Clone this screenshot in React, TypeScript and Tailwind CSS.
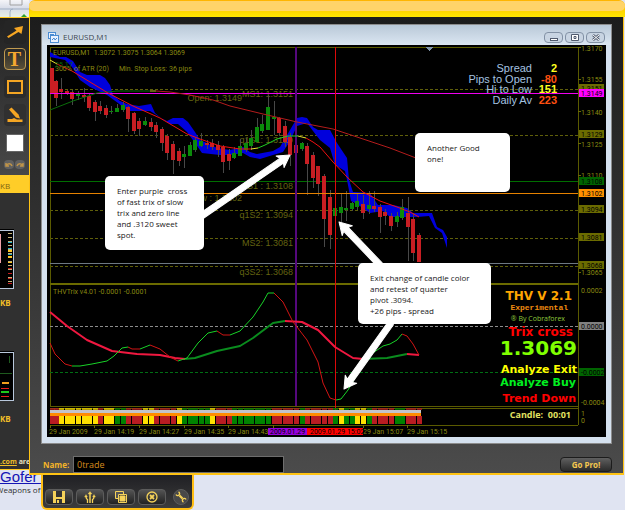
import React from 'react'

type Point = [number, number]

const CANDLE_STEP = 5.59
const CANDLE_START = 50

// open/close top, open/close bottom, high, low, colour
type Candle = [number, number, number, number, 'r' | 'g']

const candles: Candle[] = [
  [68, 93, 68, 93, 'r'], [81, 98, 80, 106, 'r'], [89, 92, 78, 99, 'r'], [91, 93, 90, 95, 'r'],
  [92, 99, 90, 105, 'r'], [94, 96, 91, 100, 'g'], [95, 97, 88, 102, 'r'], [96, 108, 94, 111, 'r'],
  [102, 112, 100, 121, 'r'], [106, 111, 101, 114, 'r'], [108, 115, 105, 118, 'r'], [111, 112, 106, 114, 'g'],
  [108, 112, 104, 112, 'g'], [105, 110, 102, 112, 'g'], [107, 119, 106, 132, 'r'], [113, 131, 112, 134, 'r'],
  [121, 129, 118, 136, 'r'], [121, 125, 117, 126, 'g'], [122, 127, 118, 131, 'r'], [125, 132, 122, 138, 'r'],
  [129, 143, 127, 151, 'r'], [136, 153, 134, 160, 'r'], [144, 160, 141, 174, 'r'], [151, 161, 148, 166, 'r'],
  [154, 157, 146, 168, 'g'], [145, 156, 142, 156, 'g'], [140, 150, 138, 152, 'g'], [141, 146, 133, 147, 'g'],
  [143, 145, 140, 149, 'r'], [143, 147, 139, 150, 'r'], [145, 150, 141, 157, 'r'], [147, 162, 145, 173, 'r'],
  [154, 161, 149, 170, 'r'], [153, 158, 147, 159, 'g'], [146, 156, 139, 156, 'g'], [143, 150, 138, 152, 'g'],
  [138, 146, 130, 150, 'g'], [127, 142, 118, 142, 'g'], [124, 131, 115, 133, 'g'], [107, 130, 95, 130, 'g'],
  [117, 119, 101, 135, 'g'], [118, 133, 117, 136, 'r'], [126, 142, 121, 147, 'r'], [137, 155, 133, 166, 'r'],
  [145, 153, 140, 156, 'r'], [143, 149, 142, 151, 'g'], [146, 164, 143, 195, 'r'], [155, 178, 152, 188, 'r'],
  [166, 184, 166, 196, 'r'], [176, 219, 174, 247, 'r'], [197, 235, 190, 249, 'r'], [208, 216, 203, 219, 'g'],
  [207, 213, 193, 222, 'g'], [208, 210, 191, 221, 'g'], [203, 209, 202, 211, 'g'], [201, 207, 193, 210, 'g'],
  [204, 213, 195, 219, 'r'], [205, 209, 191, 214, 'g'], [206, 209, 191, 212, 'r'], [207, 217, 204, 233, 'r'],
  [212, 216, 209, 225, 'r'], [216, 226, 213, 231, 'r'], [216, 222, 212, 227, 'g'], [207, 218, 199, 220, 'g'],
  [213, 227, 197, 261, 'r'], [219, 253, 213, 261, 'r'], [235, 262, 233, 262, 'r'],
]

const trend = 'RRYYYYYYYRYYGGRRRYYRRRRYGGGGGYRRRGGGGGGGRRRRRGRRRRRGYGGYYGRRRRGGRRR'.split('')

const trendColor: Record<string, string> = { R: '#b81c22', Y: '#ffe000', G: '#008200' }
const candleColor = { r: '#c81e23', g: '#0a8a0a' }

const cloud =
  'M50 52 L60 57 66 57 73 61 80 72 87 75 100 75 105 78 110 85 113 95 120 101 127 104 139 106 151 104 155 113 161 118 167 121 173 118 183 118 188 122 195 132 200 140 207 143 217 148 230 150 243 147 250 152 257 154 273 151 280 147 290 130 297 118 302 117 307 118 313 127 318 130 330 130 337 143 347 158 349 180 353 192 370 193 378 205 393 205 407 208 413 213 432 213 437 227 443 230 447 237 447 248 442 233 435 228 429 216 417 217 390 217 383 211 370 213 357 204 351 201 347 180 345 171 335 165 330 148 320 140 313 131 307 123 297 126 290 141 283 152 273 155 260 159 250 157 243 153 230 155 220 155 202 153 195 143 187 132 178 124 170 124 155 114 150 111 128 111 118 103 107 95 90 87 80 80 72 67 65 60 50 57Z'

interface Segment {
  color: string
  points: Point[]
}

const fastAverage: Segment[] = [
  { color: '#e8e030', points: [[50, 60], [57, 64]] },
  { color: '#f01010', points: [[57, 64], [72, 71], [90, 82], [108, 93], [133, 106], [160, 118], [187, 134], [200, 139], [220, 146], [240, 149], [251, 149]] },
  { color: '#e8e030', points: [[251, 149], [258, 148]] },
  { color: '#20d020', points: [[258, 148], [265, 145], [277, 139], [288, 136], [298, 136]] },
  { color: '#e8e030', points: [[298, 136], [306, 138]] },
  { color: '#f01010', points: [[306, 138], [313, 142], [320, 147], [333, 162], [347, 177], [363, 192], [380, 201], [397, 207], [410, 212], [419, 217]] },
]

const slowAverage: Segment[] = [
  { color: '#0a6e0a', points: [[50, 110], [73, 101], [97, 93], [117, 91], [150, 91]] },
  { color: '#c8c020', points: [[150, 91], [156, 91]] },
  { color: '#b41c1c', points: [[156, 91], [170, 92], [190, 95], [213, 100], [230, 106], [263, 114], [297, 122], [333, 129], [363, 139], [390, 148], [416, 158]] },
]

const fastTrix: Segment[] = [
  { color: '#d21414', points: [[50, 343], [55, 354], [65, 364], [72, 366]] },
  { color: '#18d228', points: [[72, 366], [80, 366], [92, 364], [107, 361], [114, 356], [122, 348], [128, 347]] },
  { color: '#d21414', points: [[128, 347], [132, 349], [140, 349]] },
  { color: '#18d228', points: [[140, 349], [150, 345]] },
  { color: '#d21414', points: [[150, 345], [160, 349], [170, 357], [178, 361]] },
  { color: '#18d228', points: [[178, 361], [187, 358], [198, 343], [208, 333], [217, 331]] },
  { color: '#d21414', points: [[217, 331], [223, 335], [230, 335]] },
  { color: '#18d228', points: [[230, 335], [240, 331], [253, 317], [263, 302], [268, 293], [274, 293]] },
  { color: '#d21414', points: [[274, 293], [283, 302], [293, 322], [297, 327], [307, 340], [318, 362], [323, 383], [330, 398], [336, 400]] },
  { color: '#18d228', points: [[336, 400], [341, 399], [348, 390], [367, 357], [383, 346], [390, 344], [397, 340], [402, 334]] },
  { color: '#d21414', points: [[402, 334], [407, 336], [413, 344], [419, 355]] },
]

const slowTrix: Segment[] = [
  { color: '#f01840', points: [[50, 312], [67, 326], [87, 340], [112, 351], [137, 354], [160, 355], [175, 358], [185, 359]] },
  { color: '#0a8c1e', points: [[185, 359], [195, 358], [217, 351], [240, 346], [253, 338], [273, 323], [285, 321]] },
  { color: '#f01840', points: [[285, 321], [302, 322], [318, 330], [335, 347], [353, 358], [363, 359]] },
  { color: '#0a8c1e', points: [[363, 359], [387, 358], [407, 354]] },
  { color: '#f01840', points: [[407, 354], [419, 355]] },
]

const pivotLabels = [
  { text: 'Open: 1.3149', x: 242, y: 101 },
  { text: 'MS1: 1.3151', x: 293, y: 97 },
  { text: 'q1S1: 1.3129', x: 293, y: 143 },
  { text: 'S1 : 1.3108', x: 293, y: 189 },
  { text: 'Low : 1.3102', x: 242, y: 201 },
  { text: 'q1S2: 1.3094', x: 293, y: 218 },
  { text: 'MS2: 1.3081', x: 293, y: 246 },
  { text: 'q3S2: 1.3068', x: 293, y: 275 },
]

const priceLabels = [
  { text: '1.3170', y: 48 },
  { text: '1.3155', y: 79 },
  { text: '1.3140', y: 112 },
  { text: '1.3125', y: 144 },
  { text: '1.3110', y: 175 },
  { text: '1.3065', y: 272 },
  { text: '0.0002', y: 290 },
  { text: '-0.0004', y: 402 },
  { text: '1', y: 413 },
  { text: '0', y: 420 },
]

const priceTags = [
  { text: '1.3151', y: 88, fill: '#6b6b00' },
  { text: '1.3149', y: 93, fill: '#ff00ff' },
  { text: '1.3129', y: 134, fill: '#6b6b00' },
  { text: '1.3108', y: 181, fill: '#006400' },
  { text: '1.3102', y: 193, fill: '#ff9000' },
  { text: '1.3094', y: 209, fill: '#6b6b00' },
  { text: '1.3081', y: 237, fill: '#6b6b00' },
  { text: '1.3068', y: 265, fill: '#6b6b00' },
  { text: '0.0000', y: 326, fill: '#808080' },
  { text: '-0.0002', y: 372, fill: '#006400' },
]

const timeLabels = [
  { text: '29 Jan 2009', x: 49 },
  { text: '29 Jan 14:19', x: 94 },
  { text: '29 Jan 14:27', x: 139 },
  { text: '29 Jan 14:35', x: 184 },
  { text: '29 Jan 14:43', x: 228 },
  { text: '29 Jan 15:07', x: 363 },
  { text: '29 Jan 15:15', x: 407 },
]

const stats = [
  { label: 'Spread', value: '2', y: 72, fill: '#ffff20' },
  { label: 'Pips to Open', value: '-80', y: 83, fill: '#ff5010' },
  { label: 'Hi to Low', value: '151', y: 93, fill: '#ffff20' },
  { label: 'Daily Av', value: '223', y: 104, fill: '#ff5010' },
]

const signals = [
  { text: 'THV V 2.1', x: 572, y: 300, fill: '#ffa500', className: "font-['DejaVu_Sans'] text-[12px] font-bold" },
  { text: 'Experimental', x: 568, y: 310, fill: '#f08c10', className: "font-['Liberation_Mono'] text-[8px] font-bold" },
  { text: '® By Cobraforex', x: 565, y: 321, fill: '#8cc83c', className: "font-['Open_Sans'] text-[7px]" },
  { text: 'Trix cross', x: 573, y: 336, fill: '#ff0000', className: "font-['DejaVu_Sans'] text-[12px] font-bold" },
  { text: '1.3069', x: 577, y: 355, fill: '#80ff00', className: "font-['DejaVu_Sans'] text-[20px] font-bold" },
  { text: 'Analyze Exit', x: 577, y: 373, fill: '#ffff00', className: "font-['DejaVu_Sans'] text-[11px] font-bold" },
  { text: 'Analyze Buy', x: 576, y: 386, fill: '#00f020', className: "font-['DejaVu_Sans'] text-[11px] font-bold" },
  { text: 'Trend Down', x: 576, y: 402, fill: '#ff0000', className: "font-['DejaVu_Sans'] text-[11px] font-bold" },
  { text: 'Candle:  00:01', x: 571, y: 418, fill: '#e0e060', className: "font-['Open_Sans'] text-[9px] font-bold whitespace-pre" },
]

const notes = [
  { x: 105, y: 176, width: 99, height: 74, lines: ['Enter purple  cross', 'of fast trix of slow', 'trix and zero line', 'and .3120 sweet', 'spot.'] },
  { x: 415, y: 133, width: 95, height: 59, lines: ['Another Good', 'one!'] },
  { x: 358, y: 263, width: 133, height: 61, lines: ['Exit change of candle color', 'and retest of quarter', 'pivot .3094.', '+26 pips - spread'] },
]

const Curve: React.FC<{ segments: Segment[]; width: number }> = ({ segments, width }) => (
  <g fill="none" strokeWidth={width} strokeLinejoin="round">
    {segments.map((segment, i) => (
      <polyline key={i} stroke={segment.color} points={segment.points.map((p) => p.join(',')).join(' ')} />
    ))}
  </g>
)

const Arrow: React.FC<{ from: Point; to: Point }> = ({ from, to }) => {
  const dx = to[0] - from[0]
  const dy = to[1] - from[1]
  const length = Math.hypot(dx, dy)
  const angle = (Math.atan2(dy, dx) * 180) / Math.PI
  return (
    <path
      d={`M0 0 L-12 -7 L-10 -3 L${-length} -3 L${-length} 3 L-10 3 L-12 7Z`}
      transform={`translate(${to[0]} ${to[1]}) rotate(${angle})`}
      fill="#fff"
      stroke="#fff"
      strokeLinejoin="round"
    />
  )
}

const Chart: React.FC = () => (
  <svg viewBox="47 45 559 392" className="block h-auto w-full bg-black font-['Roboto',sans-serif] text-[7px]">
    <g shapeRendering="crispEdges">
      <path d="M50 89.5H578M50 135.5H578M50 210.5H578M50 238.5H578M50 266.5H578" stroke="#5f5f0a" strokeDasharray="3 2" />
      <path d="M50 47.5H578M50.5 47V406M578.5 47V425M50 406.5H578M50 408.5H578M50 425.5H578" stroke="#5a5a00" fill="none" />
      <path d="M50 284H578" stroke="#6b6b00" strokeWidth="2" />
      <path d="M50 326.5H578" stroke="#8c8c8c" strokeDasharray="3 2" />
      <path d="M50 372.5H578" stroke="#006e14" strokeDasharray="3 2" />
      <rect x="50" y="181" width="528" height="1" fill="#006e00" />
      <rect x="50" y="263" width="528" height="1" fill="#6e7882" />
    </g>

    <path d={cloud} fill="#0000dc" />

    <g className="font-['Liberation_Sans'] text-[9px]" fill="#646410" textAnchor="end">
      {pivotLabels.map((label) => (
        <text key={label.text} x={label.x} y={label.y}>{label.text}</text>
      ))}
    </g>

    <g shapeRendering="crispEdges">
      {candles.map(([top, bottom, high, low, color], i) => {
        const x = Math.round(CANDLE_START + i * CANDLE_STEP)
        return (
          <g key={i}>
            <rect x={x} y={high} width="1" height={low - high} fill="#484848" />
            <rect x={i ? x - 2 : x} y={top} width="4" height={bottom - top} fill={candleColor[color]} />
          </g>
        )
      })}
      <rect x="50" y="193" width="528" height="1" fill="#e68200" />
      <rect x="50" y="93" width="528" height="1" fill="#f000f0" />
      <rect x="295" y="47" width="2" height="359" fill="#55087d" />
      <rect x="335" y="47" width="1" height="377" fill="#dc0a0a" />
    </g>

    <Curve segments={slowAverage} width={1} />
    <Curve segments={fastAverage} width={1} />
    <Curve segments={slowTrix} width={2} />
    <Curve segments={fastTrix} width={1} />

    <g shapeRendering="crispEdges">
      {trend.map((value, i) => {
        const x = Math.round(CANDLE_START + i * CANDLE_STEP) - 2
        return (
          <g key={i} fill={trendColor[value]}>
            <rect x={Math.max(x, 50)} y="408" width="5" height="2" opacity="0.7" />
            <rect x={Math.max(x, 50)} y="416" width="5" height="8" />
          </g>
        )
      })}
      <rect x="50" y="410" width="371" height="3" fill="#c3c3c8" />
      <rect x="50" y="413" width="371" height="3" fill="#ff8c00" />
      <path d="M426 47H433L429.500 51Z" fill="#8296aa" />
      <path d="M50.5 425V428M94.5 425V428M139.5 425V428M184.5 425V428M228.5 425V428M273.5 425V428M363.5 425V428M407.5 425V428" stroke="#6b6b00" />
      <path d="M578 47.5H581M578 79.5H581M578 111.5H581M578 143.5H581M578 175.5H581M578 272.5H581" stroke="#6b6b00" />
    </g>

    <g fill="#8a8a10">
      <text x="53" y="55" className="whitespace-pre">EURUSD,M1  1.3072 1.3075 1.3064 1.3069</text>
      <text x="55" y="71">300% of ATR (20)</text>
      <text x="55" y="67" fill="#0a640a">25.17</text>
      <text x="119" y="71">Min. Stop Loss:</text>
      <text x="169" y="71">36 pips</text>
      <text x="53" y="294">THVTrix v4.01 -0.0001 -0.0001</text>
      {priceLabels.map((label) => (
        <text key={label.text} x="581" y={label.y + 3}>{label.text}</text>
      ))}
      {timeLabels.map((label) => (
        <text key={label.text} x={label.x} y="434">{label.text}</text>
      ))}
    </g>

    {priceTags.map((tag) => (
      <g key={tag.text}>
        <rect x="579" y={tag.y - 4} width="25" height="8" fill={tag.fill} />
        <text x="581" y={tag.y + 3}>{tag.text}</text>
      </g>
    ))}

    <rect x="268" y="428" width="40" height="7" fill="#9600dc" />
    <text x="270" y="434">2009.01.29 1</text>
    <rect x="307" y="428" width="56" height="7" fill="#ff0000" />
    <text x="310" y="434">2009.01.29 15:02</text>

    <g className="font-['Liberation_Sans'] text-[11px]" textAnchor="end">
      {stats.map((stat) => (
        <g key={stat.label}>
          <text x="532" y={stat.y} fill="#a5c3e1">{stat.label}</text>
          <text x="557" y={stat.y} fill={stat.fill} className="font-bold">{stat.value}</text>
        </g>
      ))}
    </g>

    {signals.map((signal) => (
      <text key={signal.text} x={signal.x} y={signal.y} fill={signal.fill} textAnchor="end" className={signal.className}>
        {signal.text}
      </text>
    ))}

    <Arrow from={[200, 217]} to={[290, 155]} />
    <Arrow from={[380, 265]} to={[339, 222]} />
    <Arrow from={[391, 323]} to={[344, 389]} />
    {notes.map((note) => (
      <g key={note.x} className="font-['Open_Sans'] text-[8px]">
        <rect x={note.x} y={note.y} width={note.width} height={note.height} rx="5" fill="#fff" />
        {note.lines.map((line, i) => (
          <text key={line} x={note.x + 12} y={note.y + 18 + i * 11} fill="#202020" className="whitespace-pre">{line}</text>
        ))}
      </g>
    ))}
  </svg>
)

const ToolPalette: React.FC = () => (
  <div className="flex h-[158px] flex-col items-center border-t border-[#ffc81e] bg-gradient-to-b from-[#222] to-[#484848] pt-0.5">
    <button aria-label="Arrow" className="flex h-6 w-[22px] items-center justify-center rounded bg-[#252525]">
      <svg viewBox="0 0 18 14" className="h-[14px] w-[18px]" fill="#f5a623">
        <path d="M1 11.500 L10.500 5.500 L8 3 L17 1 L15.500 9 L12.500 7 L2.500 13Z" />
      </svg>
    </button>
    <button aria-label="Text" className="mt-1 flex h-[22px] w-[22px] items-center justify-center rounded border border-[#c09a50] bg-gradient-to-b from-[#282828] to-[#5a5038] font-['Liberation_Serif'] text-[20px] leading-none font-bold text-[#f5a82f]">
      T
    </button>
    <button aria-label="Rectangle" className="mt-1.5 flex h-[22px] w-[22px] items-center justify-center rounded bg-[#2b2b2b]">
      <span className="h-[14px] w-4 border-2 border-[#f5a623]" />
    </button>
    <button aria-label="Highlighter" className="mt-1.5 flex h-[22px] w-[22px] items-center justify-center rounded bg-[#303030]">
      <svg viewBox="0 0 16 16" className="h-4 w-4" fill="#f5a623">
        <path d="M2 2.500 L4.500 0.500 L11.500 7.500 L13 11.500 L9 10.500Z" />
        <path d="M0.500 12 H5 L7 11 L10 12.500 H15.500 V15 H0.500Z" />
      </svg>
    </button>
    <button aria-label="Colour" className="mt-2 h-[18px] w-[18px] border border-[#666] bg-white" />
    <div className="mt-2 flex gap-px">
      <button aria-label="Undo" className="flex h-[9px] w-[10px] items-center justify-center rounded-sm bg-[#606060]">
        <svg viewBox="0 0 8 6" className="h-[6px] w-2" fill="none" stroke="#c09448" strokeWidth="1.500">
          <path d="M1 1V4H4M1.500 3.500C3 1 6 1 7 4" />
        </svg>
      </button>
      <button aria-label="Redo" className="flex h-[9px] w-[10px] items-center justify-center rounded-sm bg-[#606060]">
        <svg viewBox="0 0 8 6" className="h-[6px] w-2" fill="none" stroke="#c09448" strokeWidth="1.500">
          <path d="M7 1V4H4M6.500 3.500C5 1 2 1 1 4" />
        </svg>
      </button>
    </div>
  </div>
)

const Sidebar: React.FC = () => (
  <aside className="flex min-w-0 flex-col whitespace-nowrap">
    <div className="h-[17px] bg-gradient-to-b from-[#f5f5f8] via-[#d7dce8] to-[#e8f0e8]">
      <svg viewBox="0 0 29 17" className="h-[17px] w-[29px]" fill="none">
        <path d="M10 0V5H22V0" stroke="#a0a0a0" />
        <path d="M0 9H29M10 17V12Q10 9 13 9" stroke="#a0afc3" />
        <path d="M21 17L24 14L27 17Z" fill="#2da02d" />
      </svg>
    </div>
    <ToolPalette />
    <div className="flex h-[18px] items-center bg-[#ffcd28] pt-1 text-[8px] text-[#806414]">KB</div>
    <div className="flex h-[276px] flex-col bg-[#303030] pt-9 text-[8px] font-bold text-[#f0be28]">
      <svg viewBox="0 0 14 60" className="h-[60px] w-[14px] bg-black" fill="none" shapeRendering="crispEdges">
        <path d="M10 4V56" stroke="#c8b478" strokeWidth="4" strokeDasharray="1 3" />
        <path d="M10 13V26" stroke="#28b4c8" strokeWidth="4" strokeDasharray="1 5" />
        <path d="M10 21V34" stroke="#ffc828" strokeWidth="4" strokeDasharray="2 4" />
        <path d="M10 39V56" stroke="#c81e1e" strokeWidth="4" strokeDasharray="1 4" />
        <path d="M0 5H1V34H0Z" fill="#f0a0a8" />
        <path d="M0 1H13V59H0" stroke="#b9c8dc" />
      </svg>
      <span className="mt-2 leading-3">KB</span>
      <svg viewBox="0 0 14 50" className="mt-[42px] h-[50px] w-[14px] bg-black" fill="none" shapeRendering="crispEdges">
        <path d="M9 5V12M0 22H12" stroke="#1e5a1e" />
        <path d="M2 32H9" stroke="#f0a01e" strokeWidth="2" />
        <path d="M1 37H9" stroke="#e61e1e" />
        <path d="M1 41H9" stroke="#1ec81e" strokeWidth="2" />
        <path d="M1 45H9" stroke="#e61e1e" />
        <path d="M0 1H13V49H0" stroke="#b9c8dc" />
      </svg>
      <span className="mt-3 leading-3">KB</span>
      <span className="mt-auto text-[7px] leading-[14px]">
        <a href="#" className="underline">.com</a> <span className="text-[#e6e0c0]">are</span>
      </span>
    </div>
    <div className="border-t border-[#ffc81e]">
      <a href="#" className="block font-['Liberation_Sans'] text-[15px] leading-[14px] text-[#1414b4] underline">Gofer F</a>
      <p className="-ml-1 font-['Open_Sans'] text-[8px] leading-[12px] text-[#303030]">Weapons of</p>
    </div>
  </aside>
)

const MarketWindow: React.FC = () => (
  <section className="border border-[#8c8c8c] bg-[#d5e1ef] px-[5px] pb-[6px]">
    <header className="-mx-[5px] flex h-5 items-center gap-1 bg-gradient-to-b from-[#b9c8d7] to-[#dbe6f2] pt-1 pr-1.5 pl-1.5">
      <svg viewBox="0 0 11 11" className="h-[11px] w-[11px]" fill="#eaf2ff" stroke="#4b8cd2">
        <rect x="0.500" y="0.500" width="7" height="6" />
        <rect x="2.500" y="3.500" width="8" height="7" />
        <path d="M4 8L6 6L7 8L9 6M2 2.500H6" fill="none" />
      </svg>
      <h1 className="flex-1 text-[8px] text-[#404850]">EURUSD,M1</h1>
      <div className="flex gap-0.5">
        <button aria-label="Minimise" className="flex h-[11px] w-[19px] items-center justify-center rounded-sm border border-[#8291a5] bg-[#c8d4e2]">
          <span className="mt-1 h-[3px] w-2 border border-[#505a6e] bg-white" />
        </button>
        <button aria-label="Maximise" className="flex h-[11px] w-[19px] items-center justify-center rounded-sm border border-[#8291a5] bg-[#c8d4e2]">
          <svg viewBox="0 0 8 7" className="h-[7px] w-2" fill="#fff" stroke="#505a6e">
            <path d="M0.500 0.500H7.500V6.500H0.500ZM3 2.500H5V4.500H3Z" />
          </svg>
        </button>
        <button aria-label="Close" className="flex h-[11px] w-[19px] items-center justify-center rounded-sm border border-[#8291a5] bg-[#c8d4e2]">
          <svg viewBox="0 0 8 7" className="h-[7px] w-2" fill="none">
            <path d="M1 1L7 6M7 1L1 6" stroke="#505a6e" strokeWidth="2.500" />
            <path d="M1 1L7 6M7 1L1 6" stroke="#fff" strokeWidth="1" />
          </svg>
        </button>
      </div>
    </header>
    <Chart />
  </section>
)

const toolButton = 'flex h-4 w-7 items-center justify-center rounded-sm border border-[#5c5c5c] bg-gradient-to-b from-[#545454] to-[#222]'

const BottomToolbar: React.FC = () => (
  <div className="relative z-10 ml-3 flex h-[35px] w-[153px] items-end gap-[3px] rounded-b-md border-2 border-t-0 border-[#ffbe14] bg-gradient-to-b from-[#202024] to-[#3c3c3c] px-0.5 pb-[3px]">
    <button aria-label="Save" className={toolButton}>
      <svg viewBox="0 0 12 12" className="h-3 w-3">
        <path d="M0 0H12V12H0Z" fill="#f5d25a" />
        <path d="M3 0H9V6H3ZM3 8H9V12H3Z" fill="#333" />
        <path d="M4 9H6V12H4Z" fill="#f5d25a" />
      </svg>
    </button>
    <button aria-label="Share" className={toolButton}>
      <svg viewBox="0 0 12 12" className="h-3 w-3" fill="none" stroke="#f5d25a">
        <path d="M6 12V2" strokeWidth="1.500" />
        <path d="M3.500 12V8.500Q2 8 2 5M8.500 12V8.500Q10 8 10 5" strokeWidth="1.300" />
        <path d="M4 3L6 0.500L8 3ZM0.500 6L2 3.500L3.500 6ZM8.500 6L10 3.500L11.500 6Z" fill="#f5d25a" strokeWidth="0.300" />
      </svg>
    </button>
    <button aria-label="Copy" className={toolButton}>
      <svg viewBox="0 0 12 12" className="h-3 w-3" stroke="#f5d25a">
        <path d="M0.500 0.500H8.500V7.500H0.500Z" fill="#555" />
        <path d="M3.500 3.500H11.500V11.500H3.500Z" fill="#333" />
        <path d="M5 5H10V10H5Z" fill="#f5d25a" />
      </svg>
    </button>
    <button aria-label="Cancel" className={toolButton}>
      <svg viewBox="0 0 12 12" className="h-3 w-3" fill="none" stroke="#f5d25a" strokeWidth="1.300">
        <circle cx="6" cy="6" r="5" />
        <path d="M4 4L8 8M8 4L4 8" strokeWidth="1.800" />
      </svg>
    </button>
    <button aria-label="Settings" className="ml-1 flex h-4 w-4 items-center justify-center rounded-full border border-[#5c5c5c] bg-[#484848]">
      <svg viewBox="0 0 12 12" className="h-3 w-3" fill="none" stroke="#f5d25a" strokeWidth="1.400">
        <path d="M4.500 4.500L7.500 7.500" strokeWidth="2.200" />
        <path d="M3.500 1A1.900 1.900 0 1 1 1 3.500M8.500 11A1.900 1.900 0 1 1 11 8.500" />
      </svg>
    </button>
  </div>
)

export default function App() {
  return (
    <div className="grid min-h-screen grid-cols-[29px_minmax(0,1fr)] overflow-hidden bg-[#e0e4f2] font-['Open_Sans',sans-serif]">
      <Sidebar />
      <main className="min-w-0">
        <div className="h-[17px] rounded-tl-md rounded-tr-md bg-gradient-to-b from-[#ffb400] to-[#ffe600] pt-px">
          <div className="h-[10px] rounded-full bg-[#ffd469]" />
        </div>
        <div className="relative z-10 mr-px border border-t-0 border-b-2 border-[#ffc314] bg-gradient-to-b from-[#1c1c1c] via-[#333] to-[#4b4b4b] px-[11px] pt-[7px]">
          <MarketWindow />
          <form className="flex h-[29px] items-end">
            <label htmlFor="name" className="w-8 pl-0.5 text-[8px] leading-4 font-bold text-[#f5b428]">Name:</label>
            <input id="name" defaultValue="0trade" className="h-[17px] w-[211px] border border-[#6e6e6e] bg-black px-[3px] text-[9px] text-[#d78c1e] outline-none" />
            <button type="button" className="mb-px ml-auto h-[15px] w-[52px] rounded-sm border border-[#1c1c1c] bg-gradient-to-b from-[#606060] to-[#2b2b2b] text-[8px] leading-3 font-bold text-[#f5c850]">
              Go Pro!
            </button>
          </form>
        </div>
        <BottomToolbar />
      </main>
    </div>
  )
}
